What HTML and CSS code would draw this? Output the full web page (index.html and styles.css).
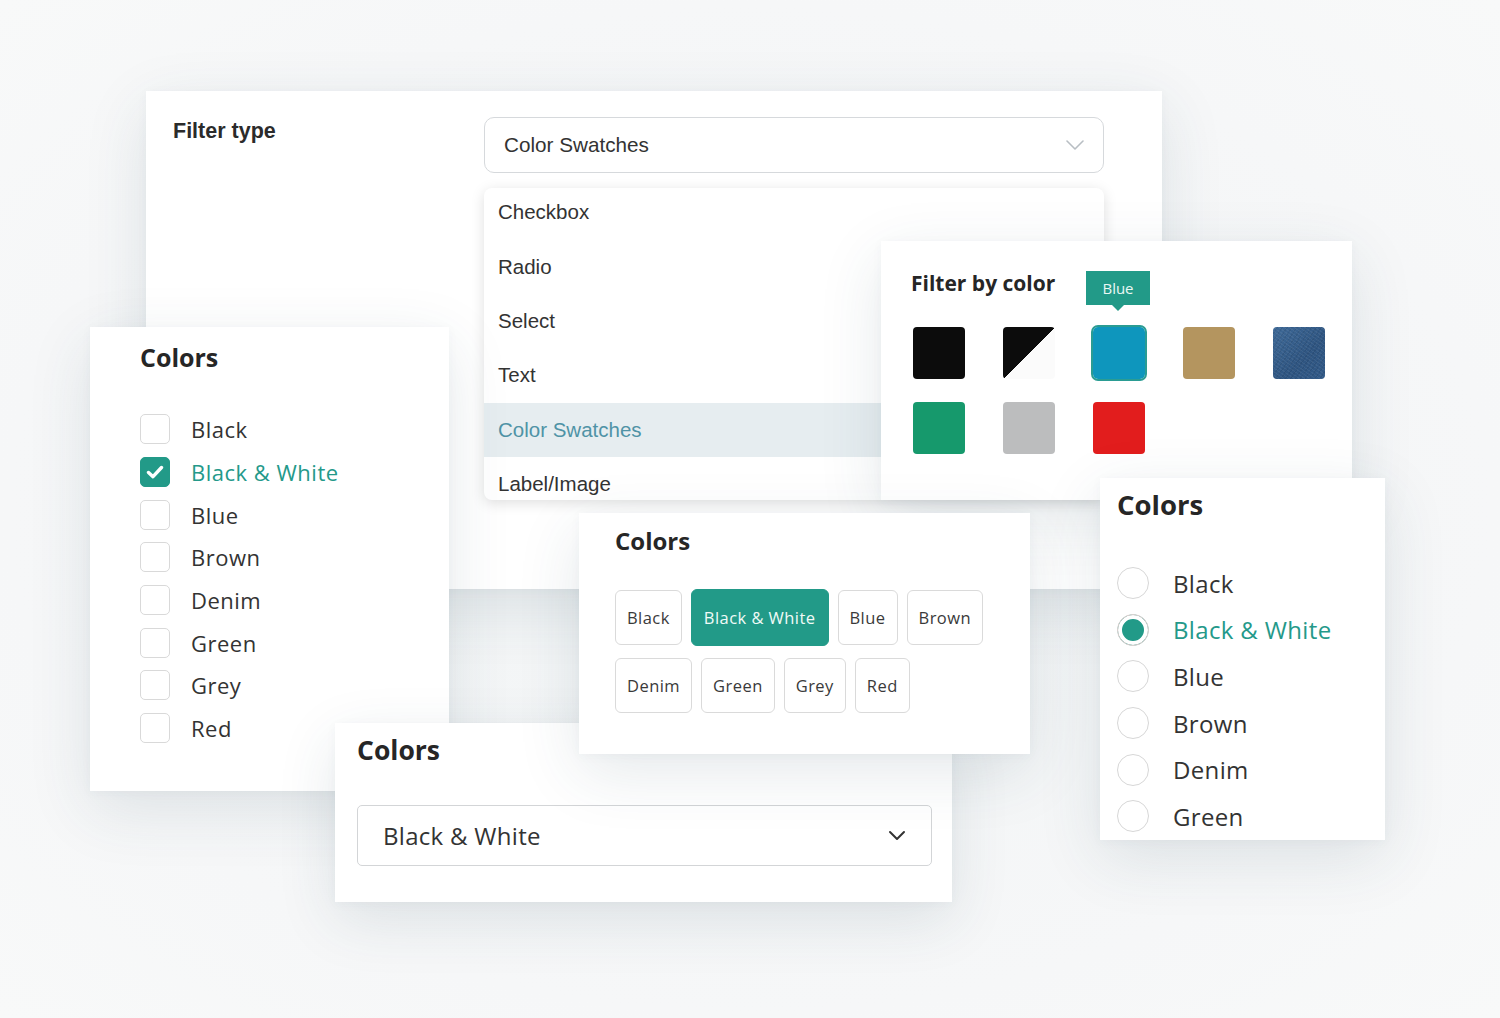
FILE: index.html
```html
<!DOCTYPE html>
<html lang="en">
<head>
<meta charset="utf-8">
<title>Filter types</title>
<link rel="stylesheet" href="styles.css">
</head>
<body>
<div class="stage">

  <section class="card card-type">
    <div class="type-grid">
      <h2 class="type-label">Filter type</h2>
      <div class="type-field">
        <div class="select-sys">
          <span>Color Swatches</span>
          <svg class="chev-light" width="18" height="10" viewBox="0 0 18 10"><path d="M1 1l8 8 8-8" fill="none" stroke="#b8bec3" stroke-width="1.6" stroke-linecap="round" stroke-linejoin="round"/></svg>
        </div>
        <div class="dropdown">
          <ul class="dd-list">
            <li>Checkbox</li>
            <li>Radio</li>
            <li>Select</li>
            <li>Text</li>
            <li class="active">Color Swatches</li>
            <li>Label/Image</li>
          </ul>
        </div>
      </div>
    </div>
  </section>

  <section class="card card-check">
    <h2 class="m-title">Colors</h2>
    <ul class="check-list">
      <li><span class="box"></span>Black</li>
      <li class="on"><span class="box"><svg width="18" height="14" viewBox="0 0 18 14"><path d="M2.5 7.5l4.5 4.2L15.5 2.5" fill="none" stroke="#fff" stroke-width="3.4" stroke-linecap="round" stroke-linejoin="round"/></svg></span>Black &amp; White</li>
      <li><span class="box"></span>Blue</li>
      <li><span class="box"></span>Brown</li>
      <li><span class="box"></span>Denim</li>
      <li><span class="box"></span>Green</li>
      <li><span class="box"></span>Grey</li>
      <li><span class="box"></span>Red</li>
    </ul>
  </section>

  <section class="card card-swatch">
    <h2 class="m-title sw-title">Filter by color</h2>
    <div class="swatches">
      <span class="sw sw-black"></span>
      <span class="sw sw-bw"></span>
      <span class="sw sw-blue sel"><span class="tip">Blue</span></span>
      <span class="sw sw-brown"></span>
      <span class="sw sw-denim"></span>
      <span class="sw sw-green"></span>
      <span class="sw sw-grey"></span>
      <span class="sw sw-red"></span>
    </div>
  </section>

  <section class="card card-select">
    <h2 class="m-title">Colors</h2>
    <div class="select-m">
      <span>Black &amp; White</span>
      <svg width="18" height="11" viewBox="0 0 18 11"><path d="M2 2l7 7 7-7" fill="none" stroke="#333" stroke-width="2" stroke-linecap="round" stroke-linejoin="round"/></svg>
    </div>
  </section>

  <section class="card card-btn">
    <h2 class="m-title">Colors</h2>
    <div class="btns">
      <span class="btn">Black</span>
      <span class="btn on">Black &amp; White</span>
      <span class="btn">Blue</span>
      <span class="btn">Brown</span>
      <span class="btn">Denim</span>
      <span class="btn">Green</span>
      <span class="btn">Grey</span>
      <span class="btn">Red</span>
    </div>
  </section>

  <section class="card card-radio">
    <h2 class="m-title">Colors</h2>
    <ul class="radio-list">
      <li><span class="rad"></span>Black</li>
      <li class="on"><span class="rad"></span>Black &amp; White</li>
      <li><span class="rad"></span>Blue</li>
      <li><span class="rad"></span>Brown</li>
      <li><span class="rad"></span>Denim</li>
      <li><span class="rad"></span>Green</li>
    </ul>
  </section>

</div>
</body>
</html>
```

FILE: styles.css
```css
* { box-sizing: border-box; }
html, body { margin: 0; padding: 0; }
body {
  background: #f4f6f7;
  font-family: "Open Sans", "Liberation Sans", sans-serif;
  color: #333;
}
h2, ul { margin: 0; padding: 0; }
ul { list-style: none; }

.stage {
  position: relative;
  width: 1500px;
  height: 1018px;
  overflow: hidden;
  background: radial-gradient(ellipse at 50% 50%, #f1f4f5 0%, #f6f7f8 70%, #f8f9f9 100%);
}

.card {
  position: absolute;
  background: #fff;
  box-shadow: 0 18px 60px rgba(40, 70, 90, 0.12), 0 2px 10px rgba(40, 70, 90, 0.04);
}

/* ---------- Filter type card ---------- */
.card-type {
  left: 146px; top: 91px; width: 1016px; height: 498px;
  padding: 26px 0 0 27px;
  font-family: "Liberation Sans", Arial, sans-serif;
}
.type-grid {
  display: grid;
  grid-template-columns: 311px 620px;
}
.type-label {
  font-size: 21.5px;
  font-weight: 700;
  color: #2b2b2b;
  line-height: 28px;
}
.select-sys {
  height: 56px;
  border: 1px solid #d6d9dc;
  border-radius: 10px;
  display: flex;
  align-items: center;
  justify-content: space-between;
  padding: 0 19px 0 19px;
  font-size: 20.7px;
  color: #333;
}
.dropdown {
  margin-top: 15px;
  height: 312px;
  border-radius: 8px;
  overflow: hidden;
  background: #fff;
  box-shadow: 0 3px 14px rgba(0, 0, 0, 0.13);
}
.dd-list { margin-top: -3px; }
.dd-list li {
  height: 54.4px;
  display: flex;
  align-items: center;
  padding-left: 14px;
  font-size: 20.5px;
  color: #333;
}
.dd-list li.active {
  background: #e6edf0;
  color: #4f93a6;
}

/* ---------- Montserrat-like titles ---------- */
.m-title {
  font-family: "Open Sans", sans-serif;
  font-weight: 700;
  color: #262626;
}

/* ---------- Checkbox card ---------- */
.card-check {
  left: 90px; top: 327px; width: 359px; height: 464px;
  padding: 14px 0 0 50px;
}
.card-check .m-title { font-size: 25px; line-height: 32px; }
.check-list { margin-top: 35px; }
.check-list li {
  height: 42.7px;
  display: flex;
  align-items: center;
  font-size: 22px;
  letter-spacing: 0.5px;
  color: #333;
}
.box {
  width: 30px; height: 30px;
  border: 1.5px solid #d9d9d9;
  border-radius: 5px;
  margin-right: 21px;
  display: flex;
  align-items: center;
  justify-content: center;
  flex: none;
}
.check-list li.on { color: #24998a; }
.check-list li.on .box { background: #229a88; border-color: #229a88; }

/* ---------- Swatch card ---------- */
.card-swatch {
  left: 881px; top: 241px; width: 471px; height: 259px;
  padding: 28px 0 0 30px;
}
.sw-title { font-size: 21px; line-height: 28px; }
.swatches {
  margin: 30px 0 0 2px;
  display: grid;
  grid-template-columns: repeat(5, 52px);
  column-gap: 38px;
  row-gap: 23px;
}
.sw {
  position: relative;
  width: 52px; height: 52px;
  border-radius: 4px;
}
.sw-black { background: #0c0c0c; }
.sw-bw { background: linear-gradient(to bottom right, #0c0c0c 50%, #fbfbfb 50%); }
.sw-blue { background: #0e96bd; }
.sw-blue.sel { outline: 2px solid #2a9c93; outline-offset: 0; border-radius: 5px; }
.sw-brown { background: #b4955f; }
.sw-denim {
  background:
    repeating-linear-gradient(35deg, rgba(255,255,255,0.06) 0 1px, transparent 1px 3px),
    repeating-linear-gradient(-55deg, rgba(0,0,0,0.08) 0 1px, transparent 1px 4px),
    linear-gradient(135deg, #3f6a98, #2f5581 60%, #325a88);
}
.sw-green { background: #16996c; }
.sw-grey { background: #bcbdbe; }
.sw-red { background: #e21d1d; }

.tip {
  position: absolute;
  left: -7px; top: -56px;
  width: 64px; height: 34px;
  background: #229a88;
  color: #eaf7f4;
  font-size: 15px;
  font-weight: 500;
  display: flex;
  align-items: center;
  justify-content: center;
}
.tip::after {
  content: "";
  position: absolute;
  left: 50%; bottom: -6px;
  margin-left: -6px;
  border-left: 6px solid transparent;
  border-right: 6px solid transparent;
  border-top: 6px solid #229a88;
}

/* ---------- Select card ---------- */
.card-select {
  left: 335px; top: 723px; width: 617px; height: 179px;
  padding: 10px 20px 0 22px;
}
.card-select .m-title { font-size: 26.5px; line-height: 34px; }
.select-m {
  margin-top: 38px;
  height: 61px;
  border: 1.5px solid #d3d5d7;
  border-radius: 5px;
  display: flex;
  align-items: center;
  justify-content: space-between;
  padding: 0 25px 0 25px;
  font-size: 24px;
  letter-spacing: 0.3px;
  color: #333;
}

/* ---------- Button card ---------- */
.card-btn {
  left: 579px; top: 513px; width: 451px; height: 241px;
  padding: 12px 0 0 36px;
}
.card-btn .m-title { font-size: 24px; line-height: 32px; }
.btns {
  margin-top: 32px;
  width: 390px;
  display: flex;
  flex-wrap: wrap;
  align-items: center;
  gap: 12px 9px;
}
.btn {
  height: 55px;
  padding: 0 11px;
  border: 1.5px solid #dadada;
  border-radius: 6px;
  display: flex;
  align-items: center;
  font-size: 16.5px;
  letter-spacing: 0.45px;
  color: #3a3a3a;
}
.btn.on {
  height: 57px;
  background: #229a88;
  border-color: #229a88;
  color: #f0faf7;
  padding: 0 12px;
}

/* ---------- Radio card ---------- */
.card-radio {
  left: 1100px; top: 478px; width: 285px; height: 362px;
  padding: 10px 0 0 17px;
}
.card-radio .m-title { font-size: 27.5px; line-height: 34px; }
.radio-list { margin-top: 38px; }
.radio-list li {
  height: 46.6px;
  display: flex;
  align-items: center;
  font-size: 24px;
  letter-spacing: 0.35px;
  color: #333;
}
.rad {
  width: 32px; height: 32px;
  border: 1.5px solid #d7d7d7;
  border-radius: 50%;
  margin-right: 24px;
  flex: none;
}
.radio-list li.on { color: #24998a; }
.radio-list li.on .rad {
  background: #229a88;
  box-shadow: inset 0 0 0 4px #fff;
  border-color: #e0d0d0;
}
```
